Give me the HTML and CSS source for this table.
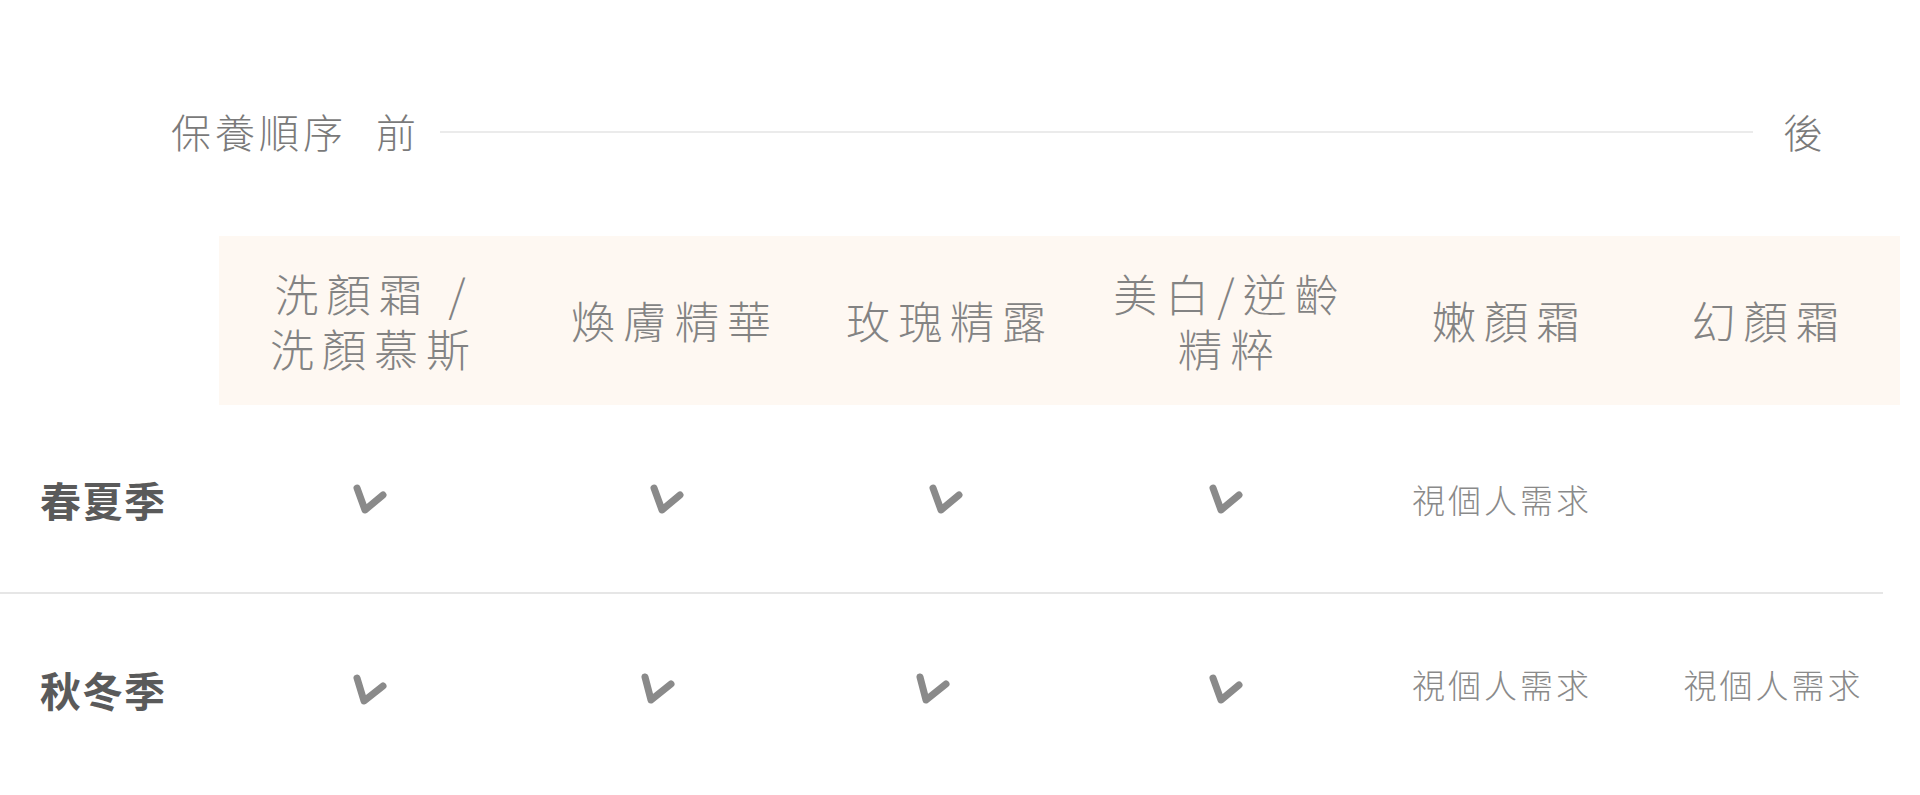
FILE: index.html
```html
<!DOCTYPE html>
<html lang="zh-Hant">
<head>
<meta charset="utf-8">
<title>保養順序</title>
<link rel="stylesheet" href="styles.css">
</head>
<body>
<div class="page">
  <div class="order">
    <span class="order-title">保養順序</span>
    <span class="order-end">前</span>
    <span class="order-line"></span>
    <span class="order-end">後</span>
  </div>

  <div class="table">
    <div class="row head">
      <div class="cell label-empty"></div>
      <div class="cell th">洗顏霜 /<br>洗顏慕斯</div>
      <div class="cell th">煥膚精華</div>
      <div class="cell th">玫瑰精露</div>
      <div class="cell th">美白/逆齡<br>精粹</div>
      <div class="cell th">嫩顏霜</div>
      <div class="cell th">幻顏霜</div>
    </div>

    <div class="row body divided">
      <div class="cell label">春夏季</div>
      <div class="cell"><svg class="check" viewBox="0 0 36 32"><path d="M5 5 L13 27 L31 12"/></svg></div>
      <div class="cell"><svg class="check shift-s" viewBox="0 0 36 32"><path d="M5 5 L13 27 L31 12"/></svg></div>
      <div class="cell"><svg class="check" viewBox="0 0 36 32"><path d="M5 5 L13 27 L31 12"/></svg></div>
      <div class="cell"><svg class="check" viewBox="0 0 36 32"><path d="M5 5 L13 27 L31 12"/></svg></div>
      <div class="cell note note-left">視個人需求</div>
      <div class="cell"></div>
    </div>

    <div class="row body">
      <div class="cell label">秋冬季</div>
      <div class="cell"><svg class="check" viewBox="0 0 36 32"><path d="M5 5 L12 28 L31 13"/></svg></div>
      <div class="cell"><svg class="check shift-l" viewBox="0 0 36 32"><path d="M5 4 L11 27 L31 11"/></svg></div>
      <div class="cell"><svg class="check shift-l" viewBox="0 0 36 32"><path d="M5 4 L11 27 L31 11"/></svg></div>
      <div class="cell"><svg class="check" viewBox="0 0 36 32"><path d="M5 5 L13 27 L31 12"/></svg></div>
      <div class="cell note note-up note-left">視個人需求</div>
      <div class="cell note note-up note-right">視個人需求</div>
    </div>
  </div>
</div>
</body>
</html>
```

FILE: styles.css
```css
* {
  box-sizing: border-box;
}

html, body {
  margin: 0;
  padding: 0;
  background: #ffffff;
}

body {
  font-family: "Noto Sans CJK TC", "Noto Sans", sans-serif;
  color: #888888;
  width: 1920px;
  height: 795px;
  overflow: hidden;
}

.page {
  display: flex;
  flex-direction: column;
}

/* top order bar */
.order {
  display: flex;
  align-items: center;
  height: 60px;
  margin-top: 101px;
  padding-left: 171px;
  padding-right: 93px;
}

.order-title,
.order-end {
  font-size: 40px;
  font-weight: 300;
  letter-spacing: 4px;
  color: #7a7a7a;
  line-height: 60px;
  white-space: nowrap;
}

.order-title {
  margin-right: 29px;
}

.order-line {
  flex: 1;
  height: 2px;
  background: #ebebeb;
  margin: 2px 30px 0 20px;
}

/* table */
.table {
  margin-top: 75px;
  display: flex;
  flex-direction: column;
}

.row {
  display: grid;
  grid-template-columns: 219px 302px 300px 250px 310px 250px 269px;
}

.row.head {
  height: 169px;
}

.cell {
  display: flex;
  align-items: center;
  justify-content: center;
}

.th {
  background: #fef8f2;
  text-align: center;
  font-size: 44px;
  font-weight: 300;
  letter-spacing: 8px;
  line-height: 55px;
  color: #838383;
  padding-left: 8px;
}

.row.body {
  height: 189px;
  width: 1883px;
}

.row.divided {
  border-bottom: 2px solid #e6e6e6;
}

.label {
  justify-content: flex-start;
  padding-left: 40px;
  font-size: 41px;
  font-weight: 700;
  color: #5a5a5a;
  letter-spacing: 1px;
}

.note {
  font-size: 33px;
  font-weight: 300;
  letter-spacing: 3px;
  color: #8a8a8a;
}

.note-left {
  padding-right: 8px;
}

.note-right {
  padding-left: 16px;
}

.note-up {
  padding-bottom: 10px;
}

.check {
  width: 36px;
  height: 32px;
  fill: none;
  stroke: #8a8a8a;
  stroke-width: 7;
  stroke-linecap: round;
  stroke-linejoin: round;
}

.shift-s {
  margin-left: -8px;
}

.shift-l {
  margin-left: -26px;
}
```
